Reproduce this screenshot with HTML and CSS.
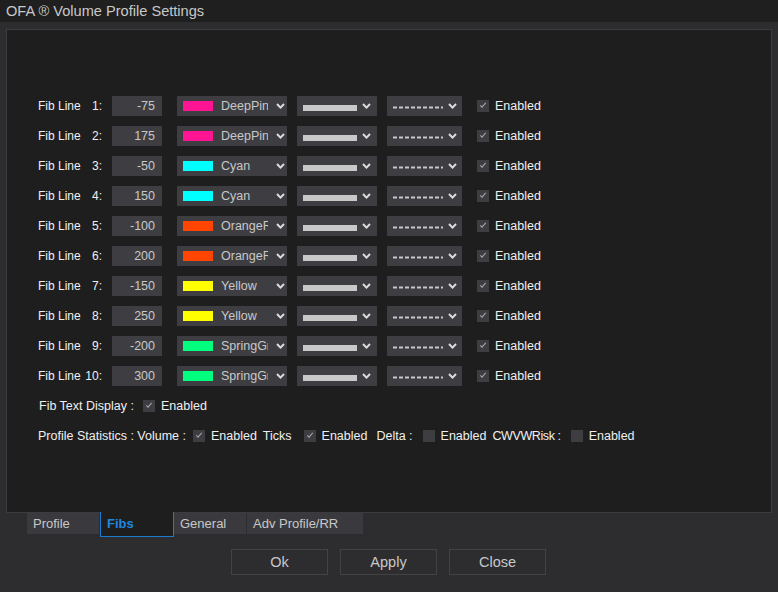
FILE: index.html
```html
<!DOCTYPE html>
<html lang="en">
<head>
    <meta charset="UTF-8">
    <title>OFA Volume Profile Settings</title>
    <link rel="stylesheet" href="styles.css">
</head>
<body>
    <div class="title-bar">OFA &reg; Volume Profile Settings</div>

    <div class="window">
        <div class="panel">
            <div class="fib-rows" id="fibRows"></div>

            <div class="opt-row fib-text">
                <span class="opt-label">Fib Text Display :</span>
                <span class="check on"></span>
                <span class="enabled">Enabled</span>
            </div>

            <div class="opt-row stats">
                <span class="opt-label volume">Profile Statistics : Volume :</span>
                <span class="check on"></span>
                <span class="enabled">Enabled</span>
                <span class="opt-label ticks">Ticks</span>
                <span class="check on"></span>
                <span class="enabled e-ticks">Enabled</span>
                <span class="opt-label">Delta :</span>
                <span class="check"></span>
                <span class="enabled e-delta">Enabled</span>
                <span class="opt-label risk">CWVWRisk :</span>
                <span class="check"></span>
                <span class="enabled">Enabled</span>
            </div>
        </div>

        <div class="tabs">
            <div class="tab">Profile</div>
            <div class="tab active">Fibs</div>
            <div class="tab">General</div>
            <div class="tab wide">Adv Profile/RR</div>
        </div>

        <div class="buttons">
            <button class="btn">Ok</button>
            <button class="btn">Apply</button>
            <button class="btn">Close</button>
        </div>
    </div>

    <script>
        const fibs = [
            [-75, '#ff1493', 'DeepPink'],
            [175, '#ff1493', 'DeepPink'],
            [-50, '#00ffff', 'Cyan'],
            [150, '#00ffff', 'Cyan'],
            [-100, '#ff4500', 'OrangeRed'],
            [200, '#ff4500', 'OrangeRed'],
            [-150, '#ffff00', 'Yellow'],
            [250, '#ffff00', 'Yellow'],
            [-200, '#00ff7f', 'SpringGreen'],
            [300, '#00ff7f', 'SpringGreen']
        ];
        const chevron = '<svg class="chev" width="9" height="6" viewBox="0 0 9 6"><polyline points="1,1 4.5,4.6 8,1" fill="none" stroke="#dcdcdc" stroke-width="2"/></svg>';
        const rows = document.getElementById('fibRows');

        fibs.forEach(([value, color, name], i) => {
            const row = document.createElement('div');
            row.className = 'fib-row';
            row.innerHTML = `
                <span class="fib-label"><span>Fib Line</span><span class="num">${i + 1}:</span></span>
                <span class="value-box">${value}</span>
                <span class="combo color-combo">
                    <span class="swatch" style="background:${color}"></span>
                    <span class="color-name">${name}</span>
                    ${chevron}
                </span>
                <span class="combo width-combo"><span class="bar"></span>${chevron}</span>
                <span class="combo dash-combo">
                    <svg width="50" height="3" viewBox="0 0 50 3"><line x1="0" y1="1.5" x2="50" y2="1.5" stroke="#c8c8c8" stroke-width="2" stroke-dasharray="4 2"/></svg>
                    ${chevron}
                </span>
                <span class="check on"></span>
                <span class="enabled">Enabled</span>`;
            rows.appendChild(row);
        });
    </script>
</body>
</html>
```

FILE: styles.css
```css
body {
    margin: 0;
    padding: 0;
    width: 778px;
    height: 592px;
    overflow: hidden;
    background-color: #2d2d30;
    font-family: "Liberation Sans", Arial, sans-serif;
    color: #f0f0f0;
}
.title-bar {
    height: 22px;
    line-height: 22px;
    padding-left: 6px;
    background-color: #1f1f1f;
    color: #c8c8c8;
    font-size: 14.6px;
}
.window {
    padding: 7px 6px 0 6px;
}
.panel {
    height: 482px;
    border: 1px solid #3c3c3f;
    background-color: #1e1e1e;
    padding-left: 31px;
}
.fib-rows {
    padding-top: 66px;
    display: flex;
    flex-direction: column;
    gap: 10px;
}
.fib-row {
    display: flex;
    align-items: center;
    height: 20px;
    font-size: 12.5px;
}
.fib-label {
    width: 64px;
    display: flex;
    justify-content: space-between;
    margin-right: 10px;
    white-space: nowrap;
    font-size: 12px;
}
.value-box {
    width: 50px;
    height: 20px;
    line-height: 20px;
    box-sizing: border-box;
    padding-right: 7px;
    text-align: right;
    background-color: #3e3e42;
    color: #c8c8c8;
    margin-right: 15px;
}
.combo {
    height: 20px;
    display: flex;
    align-items: center;
    background-color: #3e3e42;
    box-sizing: border-box;
    padding-left: 6px;
    position: relative;
}
.chev {
    position: absolute;
    top: 7px;
}
.color-combo {
    width: 110px;
    margin-right: 10px;
}
.color-combo .chev { left: 99px; }
.swatch {
    width: 30px;
    height: 10px;
    flex-shrink: 0;
}
.color-name {
    margin-left: 8px;
    width: 47px;
    overflow: hidden;
    white-space: nowrap;
    color: #c8c8c8;
}
.width-combo {
    width: 80px;
    margin-right: 10px;
}
.width-combo .chev { left: 65px; }
.bar {
    width: 54px;
    height: 6px;
    margin-top: 3px;
    background-color: #c8c8c8;
}
.dash-combo {
    width: 75px;
    margin-right: 15px;
}
.dash-combo svg:first-child { margin-top: 3px; }
.dash-combo .chev { left: 61px; }
.check {
    width: 12px;
    height: 12px;
    background-color: #3e3e42;
    flex-shrink: 0;
    margin-right: 6px;
    position: relative;
}
.check.on::after {
    content: "";
    position: absolute;
    left: 3px;
    top: 3px;
    width: 5px;
    height: 2px;
    border-left: 1.5px solid #a8a8a8;
    border-bottom: 1.5px solid #a8a8a8;
    transform: rotate(-48deg);
}
.enabled {
    font-size: 12.5px;
    white-space: nowrap;
}
.opt-row {
    display: flex;
    align-items: center;
    height: 20px;
    font-size: 12.5px;
}
.fib-text {
    margin-top: 10px;
    padding-left: 1px;
}
.fib-text .opt-label { margin-right: 9px; }
.stats {
    margin-top: 10px;
}
.stats .opt-label { margin-right: 10px; }
.stats .opt-label.volume { margin-right: 7px; }
.stats .opt-label.ticks { margin-right: 12px; }
.stats .opt-label.risk { letter-spacing: -0.4px; }
.stats .enabled { margin-right: 6px; }
.stats .enabled.e-ticks { margin-right: 9px; }
.stats .enabled.e-delta { margin-right: 6px; }
.tabs {
    display: flex;
    padding-left: 21px;
    height: 21px;
}
.tab {
    width: 72px;
    height: 21px;
    line-height: 21px;
    box-sizing: border-box;
    padding-left: 6px;
    background-color: #3a3a3e;
    color: #c8c8c8;
    font-size: 13px;
    margin-right: 1px;
}
.tab.wide { width: 116px; }
.tab.active {
    width: 74px;
    height: 25px;
    margin-top: -1px;
    margin-right: 0;
    background-color: #1e1e1e;
    border: 1px solid #1a7bd0;
    border-top: none;
    color: #1f86e0;
    font-weight: bold;
    line-height: 24px;
}
.buttons {
    display: flex;
    gap: 12px;
    padding-left: 225px;
    margin-top: 15px;
}
.btn {
    width: 97px;
    height: 26px;
    background-color: #2d2d30;
    border: 1px solid #434346;
    color: #c8c8c8;
    font-family: "Liberation Sans", Arial, sans-serif;
    font-size: 14.5px;
    padding: 0;
}
```
